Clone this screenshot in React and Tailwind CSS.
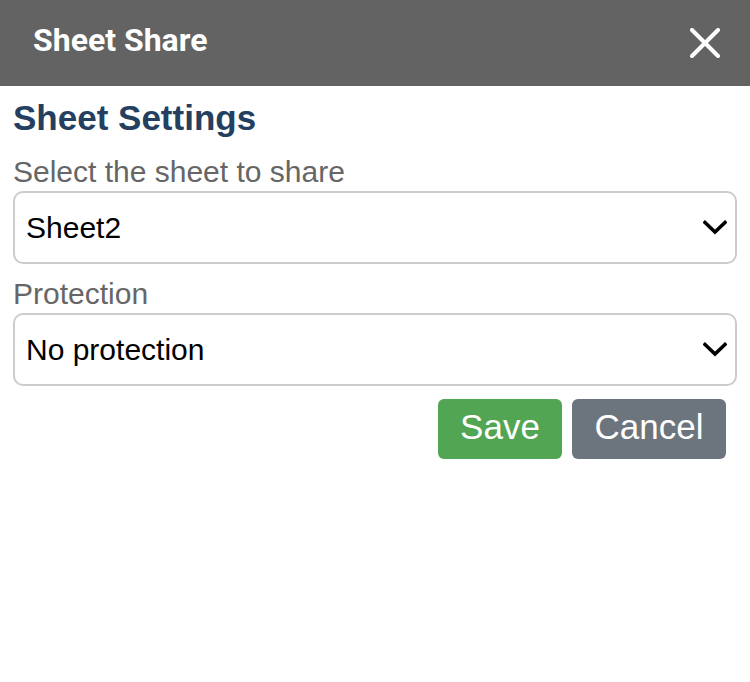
import React from "react";

const Chevron = () => (
  <svg width="24" height="15" viewBox="0 0 24 15" fill="none">
    <polyline points="2,2.5 12,12 22,2.5" stroke="#000" strokeWidth="3.6" strokeLinecap="square" />
  </svg>
);

const Field = ({ label, value }) => (
  <div className="flex flex-col">
    <div className="text-[30px] leading-[34px] text-[#666666]">{label}</div>
    <div className="mt-[2px] h-[73px] rounded-[10px] border-2 border-[#cccccc] bg-white flex items-center justify-between pl-[11px] pr-[8px]">
      <span className="text-[30px] leading-[34px] text-black">{value}</span>
      <Chevron />
    </div>
  </div>
);

export default function App() {
  return (
    <div className="w-[750px] h-[682px] bg-white" style={{ fontFamily: '"Liberation Sans", Arial, sans-serif' }}>
      {/* Header */}
      <div className="h-[86px] bg-[#636363] flex items-center justify-between pl-[33px] pr-[30px]">
        <h1 className="text-[32px] leading-[32px] font-bold text-white pb-[6px]" style={{ fontFamily: 'Roboto, sans-serif' }}>
          Sheet Share
        </h1>
        <button className="w-[30px] h-[30px] flex items-center justify-center">
          <svg width="30" height="30" viewBox="0 0 30 30">
            <line x1="2" y1="2" x2="28" y2="28" stroke="#fff" strokeWidth="4" strokeLinecap="round" />
            <line x1="28" y1="2" x2="2" y2="28" stroke="#fff" strokeWidth="4" strokeLinecap="round" />
          </svg>
        </button>
      </div>

      {/* Body */}
      <div className="px-[13px] pt-[12px]">
        <h2 className="text-[35px] leading-[40px] font-bold text-[#243f5f]">Sheet Settings</h2>
        <div className="mt-[17px]">
          <Field label="Select the sheet to share" value="Sheet2" />
        </div>
        <div className="mt-[13px]">
          <Field label="Protection" value="No protection" />
        </div>
        <div className="flex justify-end gap-[10px] mt-[13px] pr-[11px]">
          <button className="w-[124px] h-[60px] rounded-[6px] bg-[#52a552] text-white text-[35px] leading-[40px] pb-[4px]">
            Save
          </button>
          <button className="w-[154px] h-[60px] rounded-[6px] bg-[#6c757d] text-white text-[35px] leading-[40px] pb-[4px]">
            Cancel
          </button>
        </div>
      </div>
    </div>
  );
}
